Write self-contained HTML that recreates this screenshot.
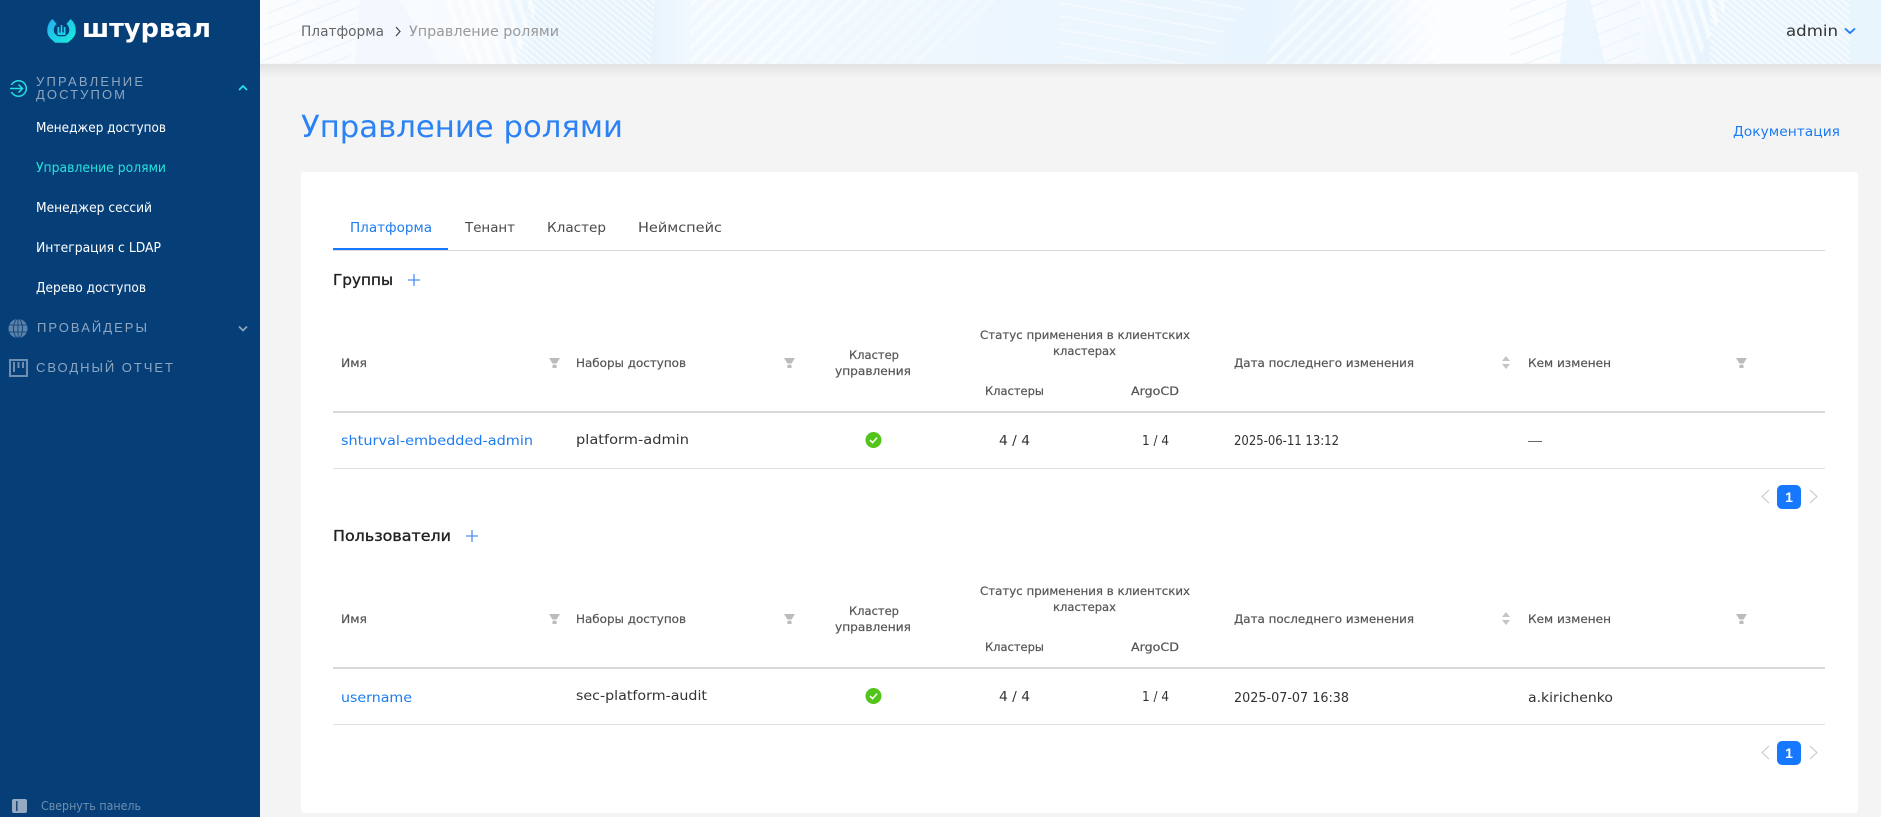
<!DOCTYPE html>
<html lang="ru"><head><meta charset="utf-8"><title>Управление ролями</title>
<style>
html,body{margin:0;padding:0;width:1881px;height:817px;overflow:hidden;background:#f4f4f4}
svg{display:block}
text{font-family:"DejaVu Sans","Liberation Sans",sans-serif;font-size:12.5px;fill:#3a3a3a}
.m{font-size:13px;fill:#fff}
.sec{font-family:"Liberation Sans",sans-serif;font-size:13px;fill:#8ea6c0}
.th{font-size:11.5px;fill:#555;stroke:#555;stroke-width:.2px}
.td{font-size:13.5px;fill:#333}
.lk{font-size:13.5px;fill:#1c7cf0}
.tab{font-size:13px;fill:#4a4a4a}
.h{font-size:15px;fill:#222;stroke:#222;stroke-width:.35px}
</style></head><body>
<svg width="1881" height="817" viewBox="0 0 1881 817" xmlns="http://www.w3.org/2000/svg">
<defs>
<linearGradient id="lg" x1="0" y1="0" x2="1" y2="1"><stop offset="0" stop-color="#22b4ee"/><stop offset="1" stop-color="#1ce6de"/></linearGradient>
<linearGradient id="sh" x1="0" y1="0" x2="0" y2="1"><stop offset="0" stop-color="#e2e2e2"/><stop offset="1" stop-color="#f4f4f4"/></linearGradient>
<linearGradient id="hb" gradientUnits="userSpaceOnUse" x1="260" y1="0" x2="1881" y2="0">
<stop offset="0" stop-color="#fafcfe"/><stop offset=".142" stop-color="#f7fbfe"/><stop offset=".17" stop-color="#e6f3fd"/><stop offset=".24" stop-color="#e6f3fd"/><stop offset=".265" stop-color="#f2f9fe"/><stop offset=".39" stop-color="#f0f8fe"/><stop offset=".45" stop-color="#edf6fe"/><stop offset=".605" stop-color="#e9f5fe"/><stop offset=".67" stop-color="#eaf5fe"/><stop offset=".725" stop-color="#fbfdff"/><stop offset=".795" stop-color="#fbfdff"/><stop offset=".85" stop-color="#f5faff"/><stop offset=".89" stop-color="#e8f4fd"/><stop offset="1" stop-color="#e9f5fd"/></linearGradient>
<pattern id="h1" width="5" height="5" patternUnits="userSpaceOnUse" patternTransform="rotate(40)"><rect width="5" height="2.200" fill="#fff" fill-opacity=".55"/></pattern>
<pattern id="h2" width="10" height="10" patternUnits="userSpaceOnUse" patternTransform="rotate(-45)"><rect width="10" height="4" fill="#fff" fill-opacity=".45"/></pattern>
<pattern id="h3" width="14" height="14" patternUnits="userSpaceOnUse" patternTransform="rotate(-22)"><rect width="14" height="1.500" fill="#e3f1fd" fill-opacity=".6"/></pattern>
<pattern id="h4" width="13" height="13" patternUnits="userSpaceOnUse" patternTransform="rotate(10)"><rect width="13" height="1.500" fill="#fff" fill-opacity=".55"/></pattern>
<pattern id="h5" width="11" height="11" patternUnits="userSpaceOnUse" patternTransform="rotate(72)"><rect width="11" height="5" fill="#fff" fill-opacity=".6"/></pattern>
<g id="filter"><path d="M0 0H11L7.500 5.500H3.500Z M3.500 6.800H7.500V10H3.500Z" fill="#bbb"/></g>
<g id="sort"><path d="M4 0L8 5H0Z M0 8H8L4 13Z" fill="#c4c4c4"/></g>
<g id="check"><circle cx="0" cy="0" r="8" fill="#52c41a"/><path d="M-3.500 0L-1 2.600L3.600 -2.400" fill="none" stroke="#fff" stroke-width="1.500"/></g>
<g id="table">
 <text class="th" x="341" y="367" textLength="26" lengthAdjust="spacingAndGlyphs">Имя</text>
 <use href="#filter" x="549" y="358"/>
 <text class="th" x="576" y="367" textLength="110" lengthAdjust="spacingAndGlyphs">Наборы доступов</text>
 <use href="#filter" x="784" y="358"/>
 <text class="th" x="849" y="359" textLength="50" lengthAdjust="spacingAndGlyphs">Кластер</text>
 <text class="th" x="835" y="375" textLength="76" lengthAdjust="spacingAndGlyphs">управления</text>
 <text class="th" x="980" y="339" textLength="210" lengthAdjust="spacingAndGlyphs">Статус применения в клиентских</text>
 <text class="th" x="1053" y="355" textLength="63" lengthAdjust="spacingAndGlyphs">кластерах</text>
 <text class="th" x="985" y="395" textLength="59" lengthAdjust="spacingAndGlyphs">Кластеры</text>
 <text class="th" x="1131" y="395" textLength="48" lengthAdjust="spacingAndGlyphs">ArgoCD</text>
 <text class="th" x="1234" y="367" textLength="180" lengthAdjust="spacingAndGlyphs">Дата последнего изменения</text>
 <use href="#sort" x="1502" y="356"/>
 <text class="th" x="1528" y="367" textLength="83" lengthAdjust="spacingAndGlyphs">Кем изменен</text>
 <use href="#filter" x="1736" y="358"/>
 <rect x="333" y="411" width="1492" height="2" fill="#d9d9d9"/>
 <rect x="333" y="468" width="1492" height="1" fill="#e0e0e0"/>
 <use href="#check" x="873.500" y="440"/>
 <text class="td" x="999" y="445" textLength="31" lengthAdjust="spacingAndGlyphs">4 / 4</text>
 <text class="td" x="1142" y="445" textLength="27" lengthAdjust="spacingAndGlyphs">1 / 4</text>
 <path d="M1769 490L1762 496.500L1769 503" fill="none" stroke="#cfcfcf" stroke-width="1.200"/>
 <rect x="1777" y="485" width="24" height="24" rx="5" fill="#1677ff"/>
 <text x="1789" y="502" text-anchor="middle" style="font-family:'Liberation Sans',sans-serif;font-size:14px;font-weight:700;fill:#fff">1</text>
 <path d="M1810 490L1817 496.500L1810 503" fill="none" stroke="#cfcfcf" stroke-width="1.200"/>
</g>
</defs>

<rect width="1881" height="817" fill="#f4f4f4"/>
<!-- top bar -->
<rect x="260" y="64" width="1621" height="14" fill="url(#sh)"/>
<rect x="260" y="0" width="1621" height="63.500" fill="url(#hb)"/>
<polygon points="360,0 400,0 440,64 355,64" fill="#eff6fe" fill-opacity=".6"/>
<polygon points="270,0 360,0 350,64 260,64" fill="url(#h3)"/>
<polygon points="440,0 540,0 515,64 470,64" fill="url(#h5)"/>
<polygon points="530,0 655,0 650,64 510,64" fill="url(#h1)"/>
<polygon points="690,0 880,0 780,64 690,64" fill="url(#h2)"/>
<polygon points="880,0 1000,0 925,64 780,64" fill="url(#h2)" opacity=".5"/>
<polygon points="1060,0 1250,0 1200,64 1060,64" fill="url(#h4)"/>
<polygon points="1300,0 1440,0 1440,64 1260,64" fill="url(#h2)"/>
<polygon points="1510,0 1640,0 1640,64 1510,64" fill="url(#h3)"/>
<polygon points="1567,0 1590,0 1605,64 1560,64" fill="#e9f4fe" fill-opacity=".8"/>
<polygon points="1640,0 1730,0 1695,64 1665,64" fill="url(#h5)"/>
<polygon points="1710,0 1850,0 1850,64 1710,64" fill="url(#h1)"/>

<text x="301" y="36" textLength="83" lengthAdjust="spacingAndGlyphs" style="font-size:14px;fill:#666">Платформа</text>
<path d="M396 27L400 31.500L396 36" fill="none" stroke="#444" stroke-width="1.200"/>
<text x="409" y="36" textLength="150" lengthAdjust="spacingAndGlyphs" style="font-size:14px;fill:#999">Управление ролями</text>
<text x="1786" y="36" textLength="52" lengthAdjust="spacingAndGlyphs" style="font-size:15px;fill:#333">admin</text>
<path d="M1845 28.500L1850 33L1855 28.500" fill="none" stroke="#1677ff" stroke-width="1.800"/>

<!-- sidebar -->
<rect x="0" y="0" width="260" height="817" fill="#063f78"/>
<path d="M54.500 21.500C51.500 24 50.500 27 50.500 30.500C50.500 33 51.500 35 53 36.500L56.500 39.500H66.500L70 36.500C71.500 35 72.500 33 72.500 30.500C72.500 27 71.500 24 68.500 21.500" fill="none" stroke="url(#lg)" stroke-width="6.500"/>
<path d="M57.500 27V35H65.500V27H63.800V32.500H62.300V25H60.700V32.500H59.200V27Z" fill="#1ccfe6"/>
<text x="82" y="37" textLength="129" lengthAdjust="spacingAndGlyphs" style="font-size:26px;font-weight:700;fill:#fff">штурвал</text>

<circle cx="18.500" cy="88.500" r="7.800" fill="none" stroke="#27dfe0" stroke-width="1.500"/>
<rect x="9" y="85" width="6" height="7" fill="#063f78"/>
<path d="M10 88.500H22M18.500 84.500L22.500 88.500L18.500 92.500" fill="none" stroke="#27dfe0" stroke-width="1.500"/>
<text class="sec" x="36" y="86" textLength="107" lengthAdjust="spacing">УПРАВЛЕНИЕ</text>
<text class="sec" x="36" y="99" textLength="89" lengthAdjust="spacing">ДОСТУПОМ</text>
<path d="M239 90L243 86L247 90" fill="none" stroke="#27dfe0" stroke-width="1.800"/>

<text class="m" x="36" y="132" textLength="130" lengthAdjust="spacingAndGlyphs">Менеджер доступов</text>
<text class="m" x="36" y="172" textLength="130" lengthAdjust="spacingAndGlyphs" style="fill:#27e3dc">Управление ролями</text>
<text class="m" x="36" y="212" textLength="116" lengthAdjust="spacingAndGlyphs">Менеджер сессий</text>
<text class="m" x="36" y="252" textLength="125" lengthAdjust="spacingAndGlyphs">Интеграция с LDAP</text>
<text class="m" x="36" y="292" textLength="110" lengthAdjust="spacingAndGlyphs">Дерево доступов</text>

<circle cx="18" cy="328.500" r="9.500" fill="#5f83a9"/>
<g stroke="#063f78" stroke-width="0.800" fill="none"><ellipse cx="18" cy="328.500" rx="4.500" ry="9.500"/><path d="M18 319V338M9 325H27M9 332H27"/></g>
<text class="sec" x="37" y="332" textLength="110" lengthAdjust="spacing">ПРОВАЙДЕРЫ</text>
<path d="M239 326.500L243 330.500L247 326.500" fill="none" stroke="#88a3bf" stroke-width="1.800"/>

<rect x="10" y="360" width="17" height="16" fill="none" stroke="#6f8fb2" stroke-width="2"/>
<path d="M14 362V372M18.500 362V368M23 362V368" stroke="#6f8fb2" stroke-width="2" fill="none"/>
<text class="sec" x="36" y="372" textLength="137" lengthAdjust="spacing">СВОДНЫЙ ОТЧЕТ</text>

<rect x="12" y="799" width="15" height="14" rx="2" fill="#94a9c2"/>
<rect x="16" y="801" width="1.500" height="10" fill="#20456f"/>
<text x="41" y="810" textLength="100" lengthAdjust="spacingAndGlyphs" style="font-size:12px;fill:#6e8fb0">Свернуть панель</text>

<!-- page heading -->
<text x="301" y="137" textLength="322" lengthAdjust="spacingAndGlyphs" style="font-size:30px;fill:#2a82f5">Управление ролями</text>
<text x="1733" y="136" textLength="107" lengthAdjust="spacingAndGlyphs" style="font-size:13px;fill:#1c7cf0">Документация</text>

<!-- card -->
<rect x="301" y="172" width="1557" height="641" rx="3" fill="#fff"/>

<text class="tab" x="350" y="232" textLength="82" lengthAdjust="spacingAndGlyphs" style="fill:#1c7cf0">Платформа</text>
<text class="tab" x="465" y="232" textLength="50" lengthAdjust="spacingAndGlyphs">Тенант</text>
<text class="tab" x="547" y="232" textLength="59" lengthAdjust="spacingAndGlyphs">Кластер</text>
<text class="tab" x="638" y="232" textLength="84" lengthAdjust="spacingAndGlyphs">Неймспейс</text>
<rect x="333" y="250" width="1492" height="1" fill="#d9d9d9"/>
<rect x="333" y="248" width="115" height="2" fill="#1677ff"/>

<text class="h" x="333" y="285" textLength="60" lengthAdjust="spacingAndGlyphs">Группы</text>
<path d="M414 274V286M408 280H420" stroke="#4f8ef7" stroke-width="1.300" fill="none"/>
<use href="#table"/>
<text class="lk" x="341" y="445" textLength="192" lengthAdjust="spacingAndGlyphs">shturval-embedded-admin</text>
<text class="td" x="576" y="444" textLength="113" lengthAdjust="spacingAndGlyphs">platform-admin</text>
<text class="td" x="1234" y="445" textLength="105" lengthAdjust="spacingAndGlyphs">2025-06-11 13:12</text>
<rect x="1528" y="441" width="14" height="1" fill="#666"/>

<text class="h" x="333" y="541" textLength="118" lengthAdjust="spacingAndGlyphs">Пользователи</text>
<path d="M472 530V542M466 536H478" stroke="#4f8ef7" stroke-width="1.300" fill="none"/>
<use href="#table" y="256"/>
<text class="lk" x="341" y="702" textLength="71" lengthAdjust="spacingAndGlyphs">username</text>
<text class="td" x="576" y="700" textLength="131" lengthAdjust="spacingAndGlyphs">sec-platform-audit</text>
<text class="td" x="1234" y="702" textLength="115" lengthAdjust="spacingAndGlyphs">2025-07-07 16:38</text>
<text class="td" x="1528" y="702" textLength="85" lengthAdjust="spacingAndGlyphs">a.kirichenko</text>
</svg>
</body></html>
